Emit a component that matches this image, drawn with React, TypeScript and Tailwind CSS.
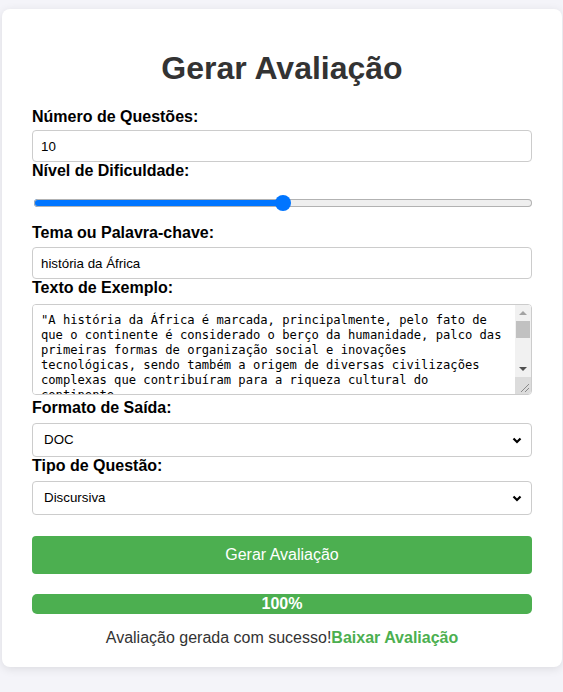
import { useState } from "react";

const sampleText =
  '"A história da África é marcada, principalmente, pelo fato de que o continente é considerado o berço da humanidade, palco das primeiras formas de organização social e inovações tecnológicas, sendo também a origem de diversas civilizações complexas que contribuíram para a riqueza cultural do continente.\n\nEntre os reinos mais conhecidos estão o Egito, Kush, Axum, Gana, Mali e Songai, que desenvolveram rotas comerciais, centros de saber e tradições artísticas de grande importância.\n\nA chegada dos europeus, o tráfico transatlântico de pessoas escravizadas e a colonização transformaram profundamente as sociedades africanas, deixando marcas que ainda hoje influenciam a política, a economia e a cultura do continente."';

const labelClass = "block text-[16px] leading-[18px] font-bold text-black";
const fieldClass =
  "block w-full rounded-[4px] border border-[#ccc] bg-white text-black";

function SelectField({ options, value }: { options: string[]; value: string }) {
  return (
    <div className="relative">
      <select
        defaultValue={value}
        className={`${fieldClass} h-[34px] appearance-none pr-8 pl-[11px] text-[13.33px]`}
      >
        {options.map((o) => (
          <option key={o}>{o}</option>
        ))}
      </select>
      <svg
        className="pointer-events-none absolute top-[14px] right-[10px]"
        width="10"
        height="7"
        viewBox="0 0 10 7"
      >
        <path d="M1.5 1.5 L5 5 L8.5 1.5" fill="none" stroke="#000" strokeWidth="2.2" />
      </svg>
    </div>
  );
}

// headless chrome hides real scrollbars, so the textarea one is painted on top
function FakeScrollbar() {
  return (
    <div className="pointer-events-none absolute top-px right-px bottom-px flex w-4 flex-col overflow-hidden rounded-r-[3px] bg-[#f1f1f1]">
      <div className="flex h-4 items-center justify-center">
        <svg width="8" height="4" viewBox="0 0 8 4">
          <path d="M0 4 L4 0 L8 4 Z" fill="#a3a3a3" />
        </svg>
      </div>
      <div className="mx-px h-[17px] bg-[#c1c1c1]" />
      <div className="flex-1" />
      <div className="flex h-4 items-center justify-center">
        <svg width="8" height="4" viewBox="0 0 8 4">
          <path d="M0 0 L8 0 L4 4 Z" fill="#505050" />
        </svg>
      </div>
      <div className="h-[17px] bg-[#dcdcdc]">
        <svg width="16" height="17" viewBox="0 0 16 17">
          <path d="M14 7 L6 15 M14 11 L10 15" stroke="#8a8a8a" strokeWidth="1" />
        </svg>
      </div>
    </div>
  );
}

export default function App() {
  const [level, setLevel] = useState(3);
  const pct = ((level - 1) / 4) * 100;

  return (
    <div className="min-h-screen bg-[#f4f4f9] pt-[9px] font-['Liberation_Sans',Arial,sans-serif]">
      <div className="mr-px ml-[2px] rounded-[8px] bg-white px-[30px] pt-5 pb-5 shadow-[0_2px_10px_rgba(0,0,0,0.1)]">
        <h1 className="my-[21px] text-center text-[32px] leading-[37px] font-bold text-[#333]">
          Gerar Avaliação
        </h1>

        <label className={`${labelClass} mb-1`}>Número de Questões:</label>
        <input
          type="number"
          defaultValue={10}
          className={`${fieldClass} h-8 px-2 text-[13.33px]`}
        />

        <label className={labelClass}>Nível de Dificuldade:</label>
        <input
          type="range"
          min={1}
          max={5}
          value={level}
          onChange={(e) => setLevel(Number(e.target.value))}
          style={{
            background: `linear-gradient(to right, #0075ff ${pct}%, #efefef ${pct}%)`,
          }}
          className="mt-[19px] ml-[2px] block h-2 w-[calc(100%-2px)] appearance-none rounded-full shadow-[inset_0_0_0_1px_#b2b2b2] [&::-webkit-slider-thumb]:h-4 [&::-webkit-slider-thumb]:w-4 [&::-webkit-slider-thumb]:appearance-none [&::-webkit-slider-thumb]:rounded-full [&::-webkit-slider-thumb]:bg-[#0075ff]"
        />

        <label className={`${labelClass} mt-[17px] mb-[5px]`}>Tema ou Palavra-chave:</label>
        <input
          type="text"
          defaultValue="história da África"
          className={`${fieldClass} h-8 px-2 text-[13.33px]`}
        />

        <label className={`${labelClass} mb-[7px]`}>Texto de Exemplo:</label>
        <div className="relative">
          <textarea
            defaultValue={sampleText}
            className={`${fieldClass} h-[91px] overflow-y-scroll py-2 pr-[25px] pl-2 font-['DejaVu_Sans_Mono',monospace] text-[12.15px] leading-[15px]`}
          />
          <FakeScrollbar />
        </div>

        <label className={`${labelClass} mt-1 mb-[6px]`}>Formato de Saída:</label>
        <SelectField options={["DOC", "PDF"]} value="DOC" />

        <label className={`${labelClass} mb-[6px]`}>Tipo de Questão:</label>
        <SelectField options={["Discursiva", "Múltipla Escolha"]} value="Discursiva" />

        <button className="mt-[21px] block h-[38px] w-full rounded-[4px] bg-[#4caf50] text-[16px] text-white">
          Gerar Avaliação
        </button>

        <div className="mt-[20px] h-5 w-full overflow-hidden rounded-[5px] bg-[#ddd]">
          <div className="flex h-full w-full items-center justify-center bg-[#4caf50] text-[16px] leading-5 font-bold text-white">
            100%
          </div>
        </div>

        <p className="mt-[14px] text-center text-[16px] leading-[19px] text-[#333]">
          Avaliação gerada com sucesso!
          <a href="#" className="font-bold text-[#4caf50]">
            Baixar Avaliação
          </a>
        </p>
      </div>
    </div>
  );
}
